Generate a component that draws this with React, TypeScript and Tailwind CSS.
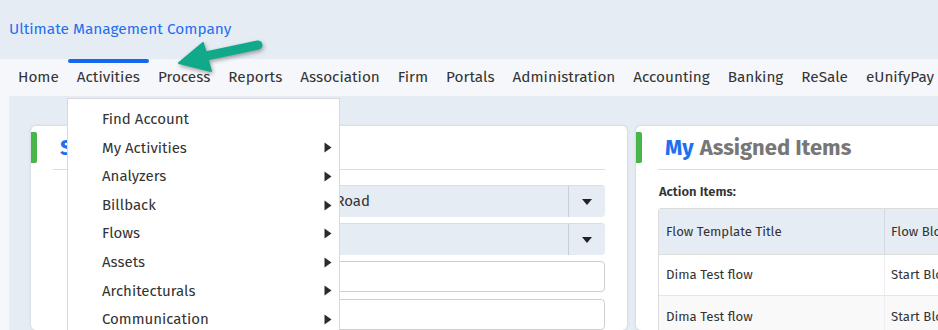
import React from "react";

const navItems = [
  "Home",
  "Activities",
  "Process",
  "Reports",
  "Association",
  "Firm",
  "Portals",
  "Administration",
  "Accounting",
  "Banking",
  "ReSale",
  "eUnifyPay",
];

const menuItems: { label: string; sub: boolean }[] = [
  { label: "Find Account", sub: false },
  { label: "My Activities", sub: true },
  { label: "Analyzers", sub: true },
  { label: "Billback", sub: true },
  { label: "Flows", sub: true },
  { label: "Assets", sub: true },
  { label: "Architecturals", sub: true },
  { label: "Communication", sub: true },
];

function Caret() {
  return (
    <svg width="12" height="8" viewBox="0 0 12 8">
      <path d="M1 1 L11 1 L6 7 Z" fill="#222" />
    </svg>
  );
}

function RightTri() {
  return (
    <svg width="8" height="11" viewBox="0 0 8 11">
      <path d="M0.5 0.5 L7.5 5.5 L0.5 10.5 Z" fill="#2b2b2b" />
    </svg>
  );
}

export default function App() {
  return (
    <div
      className="relative w-[938px] h-[330px] overflow-hidden bg-[#f5f7fa] text-[#333]"
      style={{ fontFamily: '"Fira Sans", "Noto Sans", "Open Sans", sans-serif' }}
    >
      <header className="h-[59px] bg-[#e6ecf4] flex items-center pl-[9px]">
        <span className="text-[15.4px] text-[#1f6ff0]">Ultimate Management Company</span>
      </header>

      <nav className="h-[37px] bg-[#f5f7fa] flex pl-[9px]">
        {navItems.map((n) => (
          <div key={n} className="relative h-full flex items-center px-[9px] text-[15.3px] text-[#333]">
            {n === "Activities" && (
              <div className="absolute left-0 right-0 top-0 h-[4px] bg-[#1567f0] rounded-[2px]" />
            )}
            {n}
          </div>
        ))}
      </nav>

      <main className="ml-[9px] h-[234px] bg-[#e6ecf4] pt-[30px] pl-[22px] flex gap-[9px]">
        {/* Left card */}
        <section className="relative w-[596px] shrink-0 bg-white rounded-[5px] shadow-[0_0_3px_rgba(0,0,0,0.15)]">
          <div className="absolute left-0 top-[6px] w-[6px] h-[31px] bg-[#47b54a] rounded-r-[2px]" />
          <div className="mx-[22px] h-[44px] flex items-center border-b border-[#dcdcdc] pl-[7px]">
            <span className="text-[22px] font-bold text-[#1f6ff0]">Search</span>
            <span className="text-[22px] font-bold text-[#777] ml-[6px]">Accounts</span>
          </div>
          <div className="mx-[22px] pt-[15px] flex flex-col gap-[6px]">
            <div className="flex items-center">
              <div className="w-[147px]" />
              <div className="flex-1 h-[32px] bg-[#e6ecf4] rounded-[4px] border-t border-[#d6dde6] flex">
                <div className="flex-1 flex items-center pl-[10px] text-[15px] whitespace-nowrap">
                  120 Brookside Hill Road
                </div>
                <div className="w-[37px] border-l border-[#c9cfd6] flex items-center justify-center">
                  <Caret />
                </div>
              </div>
            </div>
            <div className="flex items-center">
              <div className="w-[147px]" />
              <div className="flex-1 h-[32px] bg-[#e6ecf4] rounded-[4px] border-t border-[#d6dde6] flex">
                <div className="flex-1" />
                <div className="w-[37px] border-l border-[#c9cfd6] flex items-center justify-center">
                  <Caret />
                </div>
              </div>
            </div>
            <div className="flex items-center">
              <div className="w-[147px]" />
              <div className="flex-1 h-[31px] bg-white rounded-[4px] border border-[#cfcfcf]" />
            </div>
            <div className="flex items-center mt-[1px]">
              <div className="w-[147px]" />
              <div className="flex-1 h-[31px] bg-white rounded-[4px] border border-[#cfcfcf]" />
            </div>
          </div>
        </section>

        {/* Right card */}
        <section className="relative w-[596px] shrink-0 bg-white rounded-[5px] shadow-[0_0_3px_rgba(0,0,0,0.15)]">
          <div className="absolute left-0 top-[6px] w-[6px] h-[31px] bg-[#47b54a] rounded-r-[2px]" />
          <div className="mx-[22px] h-[44px] flex items-center border-b border-[#dcdcdc] pl-[7px]">
            <span className="text-[22px] font-bold text-[#1f6ff0]">My</span>
            <span className="text-[22px] font-bold text-[#777] ml-[6px]">Assigned Items</span>
          </div>
          <div className="mx-[22px] pt-[14px]">
            <div className="text-[13px] leading-[16px] font-semibold text-[#333] pl-[1px]">Action Items:</div>
            <div className="mt-[8px] border border-[#dcdcdc] rounded-t-[3px] text-[13.2px]">
              <div className="flex h-[46px] bg-[#e6ecf4] border-b border-[#dcdcdc]">
                <div className="w-[226px] flex items-center pl-[7px] border-r border-[#d4d9e0]">Flow Template Title</div>
                <div className="flex-1 flex items-center pl-[6px]">Flow Block Title</div>
              </div>
              <div className="flex h-[41px] bg-white border-b border-[#e6e6e6]">
                <div className="w-[226px] flex items-center pl-[7px] border-r border-[#eeeeee]">Dima Test flow</div>
                <div className="flex-1 flex items-center pl-[6px]">Start Block</div>
              </div>
              <div className="flex h-[41px] bg-[#f9f9f9]">
                <div className="w-[226px] flex items-center pl-[7px] border-r border-[#eeeeee]">Dima Test flow</div>
                <div className="flex-1 flex items-center pl-[6px]">Start Block</div>
              </div>
            </div>
          </div>
        </section>
      </main>

      {/* Dropdown menu */}
      <div className="absolute left-[67px] top-[98px] w-[273px] h-[240px] bg-white border border-[#d9d9d9] pt-[6px]">
        {menuItems.map((m) => (
          <div key={m.label} className="h-[28.6px] flex items-center pl-[34px] pr-[7px] text-[15px] text-[#333]">
            <span className="flex-1">{m.label}</span>
            {m.sub && <RightTri />}
          </div>
        ))}
      </div>

      {/* Annotation arrow */}
      <svg
        className="absolute left-[170px] top-[35px] drop-shadow-[1px_2px_2px_rgba(0,0,0,0.35)]"
        width="100"
        height="45"
        viewBox="0 0 100 45"
      >
        <line x1="36" y1="21" x2="88" y2="10" stroke="#10a98a" strokeWidth="9" strokeLinecap="round" />
        <path d="M9 28 L33 8 L41 36 Z" fill="#10a98a" stroke="#10a98a" strokeWidth="2" strokeLinejoin="round" />
      </svg>
    </div>
  );
}
